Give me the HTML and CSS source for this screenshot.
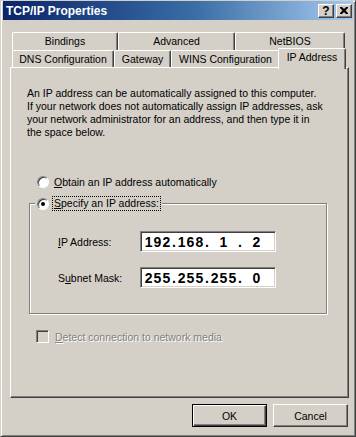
FILE: index.html
```html
<!DOCTYPE html>
<html>
<head>
    <meta charset="UTF-8">
    <title>TCP/IP Properties</title>
    <link rel="stylesheet" href="styles.css">
</head>
<body>
    <div class="window">
        <div class="titlebar">
            <span class="title">TCP/IP Properties</span>
            <div class="caption-btns">
                <span class="cap-btn help">?</span>
                <span class="cap-btn">
                    <svg width="8" height="7" viewBox="0 0 8 7"><path d="M0 0h2l2 2 2-2h2v1L5.5 3.5 8 6v1H6L4 5 2 7H0V6l2.5-2.5L0 1z" fill="#000"/></svg>
                </span>
            </div>
        </div>

        <div class="dialog">
            <div class="tabs">
                <div class="tab-row">
                    <div class="tab" style="width: 106px">Bindings</div>
                    <div class="tab" style="width: 117px">Advanced</div>
                    <div class="tab" style="width: 110px">NetBIOS</div>
                </div>
                <div class="tab-row front">
                    <div class="tab" style="width: 102px">DNS Configuration</div>
                    <div class="tab" style="width: 57px">Gateway</div>
                    <div class="tab" style="width: 109px">WINS Configuration</div>
                    <div class="tab selected" style="width: 68px">IP Address</div>
                </div>
            </div>

            <div class="panel">
                <p class="intro">
                    An IP address can be automatically assigned to this computer.<br>
                    If your network does not automatically assign IP addresses, ask<br>
                    your network administrator for an address, and then type it in<br>
                    the space below.
                </p>

                <div class="option first">
                    <span class="radio"></span>
                    <span><u>O</u>btain an IP address automatically</span>
                </div>

                <div class="group">
                    <div class="group-legend">
                        <span class="radio checked"></span>
                        <span class="focus"><u>S</u>pecify an IP address:</span>
                    </div>
                    <div class="field-row">
                        <span class="field-label"><u>I</u>P Address:</span>
                        <div class="ipbox">
                            <span class="octet">192</span><span class="dot">.</span>
                            <span class="octet">168</span><span class="dot">.</span>
                            <span class="octet">1</span><span class="dot">.</span>
                            <span class="octet">2</span>
                        </div>
                    </div>
                    <div class="field-row">
                        <span class="field-label">S<u>u</u>bnet Mask:</span>
                        <div class="ipbox">
                            <span class="octet">255</span><span class="dot">.</span>
                            <span class="octet">255</span><span class="dot">.</span>
                            <span class="octet">255</span><span class="dot">.</span>
                            <span class="octet">0</span>
                        </div>
                    </div>
                </div>

                <div class="option disabled">
                    <span class="check"></span>
                    <span><u>D</u>etect connection to network media</span>
                </div>
            </div>

            <div class="buttons">
                <button class="btn default">OK</button>
                <button class="btn">Cancel</button>
            </div>
        </div>
    </div>
</body>
</html>
```

FILE: styles.css
```css
html, body {
    margin: 0;
    padding: 0;
    background: #d4d0c8;
}

body {
    font-family: "Liberation Sans", Arial, sans-serif;
    font-size: 10.5px;
    color: #000;
}

.window {
    width: 356px;
    height: 437px;
    box-sizing: border-box;
    border: 1px solid;
    border-color: #d4d0c8 #404040 #404040 #d4d0c8;
    box-shadow: inset 1px 1px #fff, inset -1px -1px #808080;
    padding: 0 2px 2px 2px;
    background: #d4d0c8;
}

.titlebar {
    height: 19px;
    background: linear-gradient(to right, #0a246a, #3a6ea5 55%, #a6caf0);
    display: flex;
    align-items: center;
    justify-content: space-between;
    padding: 0 1px 0 3px;
}

.title {
    color: #fff;
    font-weight: bold;
    font-size: 12px;
}

.caption-btns {
    display: flex;
    gap: 2px;
}

.cap-btn {
    width: 16px;
    height: 14px;
    box-sizing: border-box;
    background: #d4d0c8;
    border: 1px solid;
    border-color: #fff #404040 #404040 #fff;
    box-shadow: inset -1px -1px #808080;
    display: flex;
    align-items: center;
    justify-content: center;
}

.cap-btn.help {
    font-weight: bold;
    font-size: 12px;
    line-height: 12px;
}

.dialog {
    padding: 12px 4px 0 7px;
}

/* tabs */
.tabs {
    padding-left: 2px;
}

.tab-row {
    display: flex;
    height: 18px;
}

.tab-row.front {
    height: 17px;
}

.tab {
    box-sizing: border-box;
    height: 18px;
    border-top: 1px solid #fff;
    border-left: 1px solid #fff;
    border-right: 1px solid #404040;
    box-shadow: inset -1px 0 #808080;
    border-radius: 2px 2px 0 0;
    text-align: center;
    line-height: 17px;
    background: #d4d0c8;
    white-space: nowrap;
}

.tab-row.front .tab {
    height: 17px;
    line-height: 16px;
}

.tab-row.front .tab.selected {
    position: relative;
    z-index: 1;
    height: 21px;
    margin: -2px -2px 0 -2px;
    line-height: 16px;
}

/* panel */
.panel {
    height: 331px;
    box-sizing: border-box;
    border: 1px solid;
    border-color: #fff #404040 #404040 #fff;
    box-shadow: inset -1px -1px #808080;
    padding: 19px 16px 0 16px;
}

.intro {
    margin: 0;
    line-height: 13px;
    white-space: nowrap;
}

.option {
    display: flex;
    align-items: center;
    height: 13px;
}

.option.first {
    margin: 36px 0 0 10px;
    gap: 5px;
}

.option.disabled {
    margin: 16px 0 0 9px;
    gap: 6px;
    color: #808080;
    text-shadow: 1px 1px #fff;
}

.radio {
    width: 12px;
    height: 12px;
    box-sizing: border-box;
    border-radius: 50%;
    border: 1px solid;
    border-color: #808080 #fff #fff #808080;
    box-shadow: inset 1px 1px #404040;
    background: #fff;
    display: flex;
    align-items: center;
    justify-content: center;
    flex: none;
}

.radio.checked::after {
    content: "";
    width: 4px;
    height: 4px;
    border-radius: 50%;
    background: #000;
}

.check {
    width: 13px;
    height: 13px;
    box-sizing: border-box;
    border: 1px solid;
    border-color: #808080 #fff #fff #808080;
    box-shadow: inset 1px 1px #404040, inset -1px -1px #d4d0c8;
    background: #d4d0c8;
    flex: none;
}

/* group box */
.group {
    margin: 15px 0 0 2px;
    width: 298px;
    box-sizing: border-box;
    border: 1px solid #808080;
    box-shadow: inset 1px 1px #fff, 1px 1px #fff;
    padding: 0 0 25px 28px;
}

.group-legend {
    display: flex;
    width: max-content;
    align-items: center;
    gap: 3px;
    margin: -8px 0 0 -23px;
    padding: 0 1px 0 2px;
    height: 15px;
    background: #d4d0c8;
}

.focus {
    border: 1px dotted #000;
    padding: 0 1px;
    line-height: 13px;
}

.field-row {
    display: flex;
    align-items: center;
    margin-top: 20px;
}

.field-row + .field-row {
    margin-top: 15px;
}

.field-label {
    width: 82px;
}

.ipbox {
    width: 136px;
    height: 21px;
    box-sizing: border-box;
    background: #fff;
    border: 1px solid;
    border-color: #808080 #fff #fff #808080;
    box-shadow: inset 1px 1px #404040, inset -1px -1px #d4d0c8;
    display: flex;
    align-items: center;
    padding-left: 3px;
    font-weight: bold;
    font-size: 14px;
    letter-spacing: 1px;
}

.octet {
    width: 28px;
    text-align: center;
}

.dot {
    width: 5px;
    text-align: center;
}

/* buttons */
.buttons {
    display: flex;
    justify-content: flex-end;
    gap: 6px;
    margin-top: 6px;
    padding-right: 1px;
}

.btn {
    width: 75px;
    height: 23px;
    box-sizing: border-box;
    font-family: "Liberation Sans", Arial, sans-serif;
    font-size: 10.5px;
    color: #000;
    background: #d4d0c8;
    border: 1px solid;
    border-color: #fff #404040 #404040 #fff;
    box-shadow: inset -1px -1px #808080;
    padding: 0;
}

.btn.default {
    border: 1px solid #000;
    box-shadow: inset 1px 1px #fff, inset -1px -1px #404040, inset -2px -2px #808080;
}
```
